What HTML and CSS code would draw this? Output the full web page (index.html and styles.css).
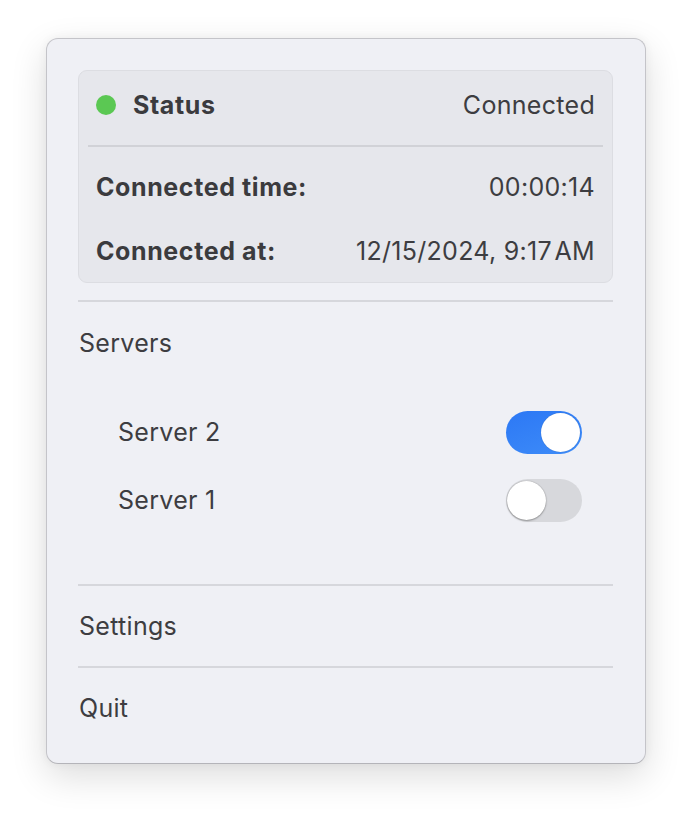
FILE: index.html
```html
<!DOCTYPE html>
<html>
<head>
<meta charset="utf-8">
<link rel="stylesheet" href="styles.css">
</head>
<body>
<div class="window">
  <div class="card">
    <div class="status-row">
      <span class="dot"></span>
      <span class="label-bold">Status</span>
      <span class="value">Connected</span>
    </div>
    <div class="card-divider"></div>
    <div class="info-row">
      <span class="label-bold">Connected time:</span>
      <span class="value">00:00:14</span>
    </div>
    <div class="info-row">
      <span class="label-bold">Connected at:</span>
      <span class="value">12/15/2024, 9:17&#8202;AM</span>
    </div>
  </div>
  <div class="divider first"></div>
  <div class="section">
    <div class="section-title">Servers</div>
    <div class="server-list">
      <div class="server-row">
        <span class="server-name">Server 2</span>
        <span class="toggle on"><span class="knob"></span></span>
      </div>
      <div class="server-row">
        <span class="server-name">Server 1</span>
        <span class="toggle off"><span class="knob"></span></span>
      </div>
    </div>
  </div>
  <div class="divider"></div>
  <div class="menu-item">Settings</div>
  <div class="divider"></div>
  <div class="menu-item last">Quit</div>
</div>
</body>
</html>
```

FILE: styles.css
```css
html, body {
  margin: 0;
  padding: 0;
  background: #ffffff;
}
body {
  font-family: Inter, "Open Sans", "Liberation Sans", sans-serif;
  color: #3d3d41;
  font-size: 25px;
  letter-spacing: 0.3px;
  min-height: 818px;
  padding-top: 38px;
  box-sizing: border-box;
}
.window {
  box-sizing: border-box;
  margin: 0 0 0 46px;
  width: 600px;
  height: 726px;
  background: #eff0f5;
  border: 1px solid #c4c4c9;
  border-bottom-color: #b4b4b9;
  border-radius: 12px;
  padding: 31px 32px 0 31px;
  box-shadow: 0 12px 36px rgba(0,0,0,0.14), 0 0 10px rgba(0,0,0,0.05);
}
.card {
  box-sizing: border-box;
  height: 213px;
  background: #e6e7ec;
  border: 1px solid #dcdde2;
  border-radius: 9px;
  padding: 0 17px;
}
.status-row {
  display: flex;
  align-items: center;
  height: 67px;
}
.dot {
  width: 20px;
  height: 20px;
  border-radius: 50%;
  background: #5bc853;
  margin-right: 17px;
}
.label-bold {
  font-weight: 700;
  color: #3b3b3e;
  letter-spacing: 0.6px;
}
.value {
  margin-left: auto;
}
.card-divider {
  height: 2px;
  background: #d1d2d7;
  margin: 7px -8px 8px;
}
.info-row {
  display: flex;
  align-items: center;
  height: 64px;
}
.divider {
  height: 2px;
  background: #d6d7dc;
}
.divider.first {
  margin-top: 17px;
}
.section {
  height: 282px;
}
.section-title {
  height: 82px;
  display: flex;
  align-items: center;
  padding-left: 1px;
}
.server-list {
  padding: 14px 31px 0 40px;
}
.server-row {
  display: flex;
  align-items: center;
  justify-content: space-between;
  height: 68px;
}
.toggle {
  position: relative;
  width: 76px;
  height: 43px;
  border-radius: 22px;
  box-sizing: border-box;
}
.toggle.on {
  background: linear-gradient(160deg, #2c78f5, #3e8cf8);
}
.toggle.off {
  background: #d7d8dc;
}
.knob {
  position: absolute;
  top: 2px;
  width: 39px;
  height: 39px;
  border-radius: 50%;
  background: #ffffff;
}
.toggle.on .knob {
  right: 2px;
  box-shadow: 0 0 1px rgba(0,0,0,0.25);
}
.toggle.off .knob {
  left: 1px;
  box-shadow: 0 1px 2px rgba(0,0,0,0.3), 0 0 1px rgba(0,0,0,0.35);
}
.menu-item {
  height: 80px;
  display: flex;
  align-items: center;
  padding-left: 1px;
}
```
